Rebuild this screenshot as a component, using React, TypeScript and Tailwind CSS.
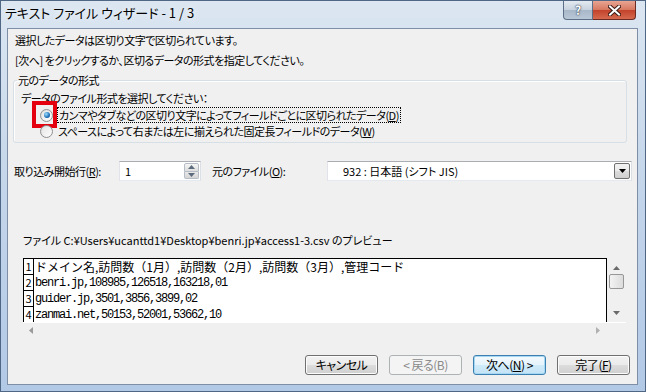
import React from 'react';

function Key({ k }: { k: string }) {
  return (
    <>
      (<span className="underline underline-offset-[1px]">{k}</span>)
    </>
  );
}

function Radio({ checked }: { checked?: boolean }) {
  return (
    <span className="relative flex h-[13px] w-[13px] shrink-0 items-center justify-center rounded-full border border-[#8e8f8f] bg-gradient-to-br from-[#dcdcdc] to-[#ffffff]">
      <span className="h-[9px] w-[9px] rounded-full bg-gradient-to-br from-[#e6e6e6] to-[#fbfbfb]" />
      {checked && (
        <span className="absolute left-[2.5px] top-[2.5px] h-[6px] w-[6px] rounded-full bg-[radial-gradient(circle_at_35%_35%,#9fe0ff,#1d6fb8_60%,#0b3f78)]" />
      )}
    </span>
  );
}

function Arrow({ dir, color = '#4d4d4d' }: { dir: 'up' | 'down' | 'left' | 'right'; color?: string }) {
  const pts = {
    up: '0,4 3.5,0 7,4',
    down: '0,0 3.5,4 7,0',
    left: '4,0 0,3.5 4,7',
    right: '0,0 4,3.5 0,7',
  }[dir];
  const horiz = dir === 'left' || dir === 'right';
  return (
    <svg width={horiz ? 4 : 7} height={horiz ? 7 : 4} viewBox={horiz ? '0 0 4 7' : '0 0 7 4'}>
      <polygon points={pts} fill={color} />
    </svg>
  );
}

function Btn({ children, focused, disabled }: { children: React.ReactNode; focused?: boolean; disabled?: boolean }) {
  const base = 'flex h-[20px] w-[73px] items-center justify-center rounded-[3px] border text-[12px] tracking-[-0.5px]';
  if (disabled)
    return <div className={`${base} border-[#adb2b5] bg-[#f4f4f4] text-[#8a8a8a]`}>{children}</div>;
  if (focused)
    return (
      <div className={`${base} border-[#3c7fb1] bg-[linear-gradient(#f4fafd_0%,#e5f3fb_50%,#d0ebf9_50%,#c3e3f6_100%)] text-black shadow-[inset_0_0_0_1px_#a7d8f3]`}>
        {children}
      </div>
    );
  return (
    <div className={`${base} border-[#707070] bg-[linear-gradient(#f2f2f2_0%,#ebebeb_50%,#dddddd_50%,#cfcfcf_100%)] text-black shadow-[inset_0_0_0_1px_#fcfcfc]`}>
      {children}
    </div>
  );
}

const ROWS = [
  'ドメイン名,訪問数（1月）,訪問数（2月）,訪問数（3月）,管理コード',
  'benri.jp,108985,126518,163218,01',
  'guider.jp,3501,3856,3899,02',
  'zanmai.net,50153,52001,53662,10',
];

export default function App() {
  return (
    <div className="relative flex h-[392px] w-[646px] flex-col overflow-hidden border border-[#4f6785] bg-gradient-to-b from-[#dbe6f1] via-[#c3d5ea] to-[#b2c9e6] font-['Noto_Sans_CJK_JP',sans-serif] text-black [font-feature-settings:'palt']">
      {/* title bar */}
      <div className="flex h-[27px] shrink-0 items-start">
        <div className="pl-[4px] pt-[3px] text-[13px] leading-[18px] text-black [text-shadow:0_0_6px_#ffffff]">
          テキスト ファイル ウィザード - 1 / 3
        </div>
        <div className="ml-auto mr-[9px] flex">
          <div className="flex h-[19px] w-[30px] items-center justify-center rounded-bl-[4px] border border-t-0 border-[#5d6f86] bg-[linear-gradient(#e3e9f0_0%,#c7d2de_50%,#a8b7c9_50%,#b9c7d6_100%)] text-[12px] font-bold text-white [text-shadow:0_0_2px_#28374b,0_0_1px_#28374b]">
            ?
          </div>
          <div className="flex h-[19px] w-[43px] items-center justify-center rounded-br-[4px] border border-l-0 border-t-0 border-[#6b2b22] bg-[linear-gradient(#e8a593_0%,#d7775f_50%,#c2412a_50%,#d5694e_100%)]">
            <svg width="13" height="11" viewBox="0 0 13 11">
              <path d="M2 1.5 L11 9.5 M11 1.5 L2 9.5" stroke="#3b1a14" strokeWidth="4" strokeLinecap="square" />
              <path d="M2 1.5 L11 9.5 M11 1.5 L2 9.5" stroke="#ffffff" strokeWidth="2" strokeLinecap="square" />
            </svg>
          </div>
        </div>
      </div>

      {/* client area */}
      <div className="mb-[6px] ml-[6px] mr-[7px] flex flex-1 flex-col border border-[#7d8ea6] bg-[#f0f0f0] text-[11px] leading-[18px]">
        <div className="ml-[7px] mt-[2px] tracking-[-0.5px]">選択したデータは区切り文字で区切られています。</div>
        <div className="ml-[7px] mt-[2px] tracking-[-0.5px]">[次へ] をクリックするか、区切るデータの形式を指定してください。</div>

        <fieldset className="ml-[5px] mr-[10px] mt-[4px] rounded-[3px] border border-[#d5dfe5] pb-[3px] pl-[3px] shadow-[inset_1px_1px_0_#ffffff]">
          <legend className="px-[1px] leading-[14px] tracking-[-0.5px]">元のデータの形式</legend>
          <div className="ml-[4px] mt-[2px] tracking-[-0.5px]">データのファイル形式を選択してください：</div>
          <div className="flex h-[16px] items-center">
            <span className="relative ml-[23px]">
              <Radio checked />
              <span className="absolute left-[-8px] top-[-8px] h-[27px] w-[25px] border-[4px] border-[#e4000f]" />
            </span>
            <span className="ml-[4px] border border-dotted border-black px-[1px] leading-[14px] tracking-[-0.5px]">
              カンマやタブなどの区切り文字によってフィールドごとに区切られたデータ<Key k="D" />
            </span>
          </div>
          <div className="flex h-[16px] items-center">
            <span className="ml-[23px]">
              <Radio />
            </span>
            <span className="ml-[5px] tracking-[-0.5px]">
              スペースによって右または左に揃えられた固定長フィールドのデータ<Key k="W" />
            </span>
          </div>
        </fieldset>

        <div className="mt-[18px] flex h-[20px] items-center">
          <div className="ml-[6px] w-[105px] tracking-[-0.5px]">
            取り込み開始行<Key k="R" />:
          </div>
          <div className="flex h-[20px] w-[82px] items-center border border-[#abadb3] border-b-[#e3e9ef] border-l-[#e2e3ea] border-r-[#dbdfe6] bg-white">
            <span className="ml-[5px] flex-1">1</span>
            <div className="mr-[1px] flex h-[16px] w-[15px] flex-col">
              <div className="flex flex-1 items-center justify-center rounded-t-[2px] border border-[#b5bcc6] bg-gradient-to-b from-[#f5f5f5] to-[#dedede]">
                <Arrow dir="up" color="#5e6b7d" />
              </div>
              <div className="flex flex-1 items-center justify-center rounded-b-[2px] border border-t-0 border-[#b5bcc6] bg-gradient-to-b from-[#e9e9e9] to-[#d4d4d4]">
                <Arrow dir="down" color="#5e6b7d" />
              </div>
            </div>
          </div>
          <div className="ml-[11px] w-[115px] tracking-[-0.5px]">
            元のファイル<Key k="O" />:
          </div>
          <div className="flex h-[20px] w-[305px] items-center border border-[#abadb3] border-b-[#e3e9ef] border-l-[#e2e3ea] border-r-[#dbdfe6] bg-white">
            <span className="ml-[15px] flex-1">932 : 日本語 (シフト JIS)</span>
            <div className="mr-[1px] flex h-[16px] w-[16px] items-center justify-center rounded-[2px] border border-[#707070] bg-[linear-gradient(#f2f2f2_0%,#ebebeb_50%,#dddddd_50%,#cfcfcf_100%)]">
              <Arrow dir="down" color="#000000" />
            </div>
          </div>
        </div>

        <div className="ml-[15px] mt-[50px]">
          ファイル C:¥Users¥ucanttd1¥Desktop¥benri.jp¥access1-3.csv のプレビュー
        </div>

        <div className="ml-[15px] mt-[9px] flex w-[603px] flex-col">
          <div className="flex h-[64px]">
            <div className="h-[64px] flex-1 overflow-hidden border border-b-0 border-black bg-white">
              {ROWS.map((r, i) => (
                <div key={i} className="flex h-[16px] items-stretch">
                  <div className="w-[10px] shrink-0 border-b border-r border-black text-center text-[11px] leading-[15px]">
                    {i + 1}
                  </div>
                  <div
                    className={
                      i === 0
                        ? 'pl-[1px] text-[12px] leading-[16px] [font-feature-settings:normal]'
                        : "pl-[1px] font-['Liberation_Mono',monospace] text-[12px] leading-[16px] tracking-[-1.2px]"
                    }
                  >
                    {r}
                  </div>
                </div>
              ))}
            </div>
            <div className="flex w-[19px] flex-col items-center bg-[#f0f0f0] pt-[8px]">
              <Arrow dir="up" color="#6a6a6a" />
              <div className="mt-[4px] h-[15px] w-[15px] rounded-[2px] border border-[#979797] bg-gradient-to-r from-[#f3f3f3] to-[#dcdcdc]" />
              <div className="flex-1" />
              <div className="mb-[7px]">
                <Arrow dir="down" color="#6a6a6a" />
              </div>
            </div>
          </div>
          <div className="flex h-[16px] items-center border-t border-[#ffffff] pr-[26px]">
            <div className="ml-[6px]">
              <Arrow dir="left" color="#9a9a9a" />
            </div>
            <div className="flex-1" />
            <Arrow dir="right" color="#b0b0b0" />
          </div>
        </div>

        <div className="mr-[7px] mt-[17px] flex justify-end gap-[11px]">
          <Btn>キャンセル</Btn>
          <Btn disabled>&lt; 戻る(B)</Btn>
          <Btn focused>
            次へ<Key k="N" /> &gt;
          </Btn>
          <Btn>
            完了<Key k="F" />
          </Btn>
        </div>
      </div>
    </div>
  );
}
